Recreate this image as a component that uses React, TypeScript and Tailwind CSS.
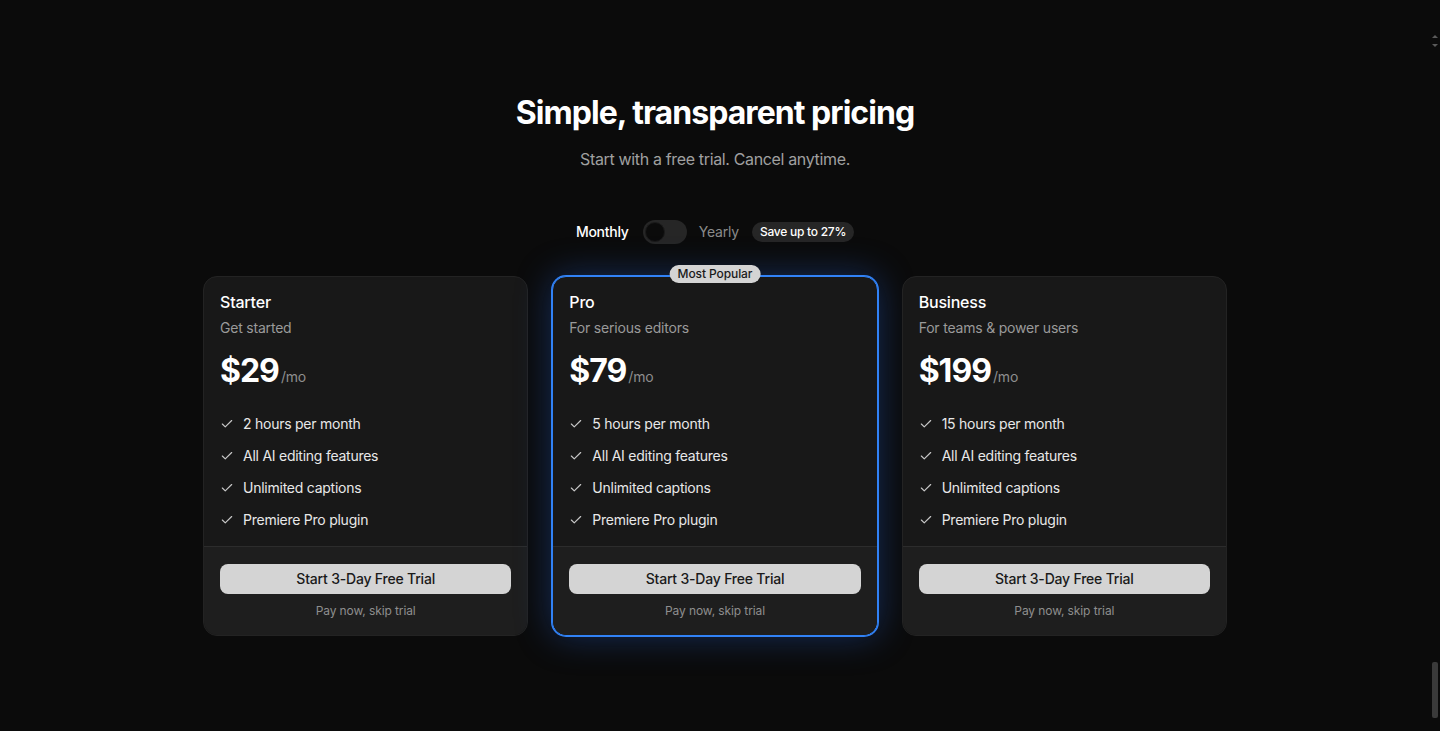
import React from "react";

const Check = () => (
  <svg width="14" height="14" viewBox="0 0 24 24" fill="none" stroke="#c8c8c8" strokeWidth="2" strokeLinecap="round" strokeLinejoin="round" className="shrink-0">
    <path d="M20 6 9 17l-5-5" />
  </svg>
);

type Plan = { name: string; desc: string; price: string; hours: string; popular?: boolean };

const plans: Plan[] = [
  { name: "Starter", desc: "Get started", price: "$29", hours: "2 hours per month" },
  { name: "Pro", desc: "For serious editors", price: "$79", hours: "5 hours per month", popular: true },
  { name: "Business", desc: "For teams & power users", price: "$199", hours: "15 hours per month" },
];

function Card({ p }: { p: Plan }) {
  const features = [p.hours, "All AI editing features", "Unlimited captions", "Premiere Pro plugin"];
  return (
    <div
      className={
        "relative flex-1 flex flex-col rounded-[14px] border bg-[#181818] " +
        (p.popular
          ? "border-[#3182f6] ring-1 ring-[#3182f6] shadow-[0_0_36px_rgba(40,110,240,0.35)]"
          : "border-[#232323]")
      }
    >
      {p.popular && (
        <div className="absolute left-1/2 -translate-x-1/2 -top-[12px] h-[18px] px-2 rounded-full bg-[#d4d4d4] text-[#1a1a1a] text-[12px] leading-[18px] font-medium tracking-[-0.1px] whitespace-nowrap">
          Most Popular
        </div>
      )}
      <div className="px-4 pt-[13px] pb-4 rounded-t-[14px]">
        <div className="text-white text-base leading-6 font-medium tracking-[-0.2px]">{p.name}</div>
        <div className="mt-1 text-[#9a9a9a] text-sm leading-5 tracking-[-0.2px]">{p.desc}</div>
        <div className="mt-[13px] flex items-baseline">
          <span className="text-white text-[32px] leading-10 font-bold tracking-[-1px]">{p.price}</span>
          <span className="ml-[2px] text-[#8e8e8e] text-sm tracking-[-0.2px]">/mo</span>
        </div>
        <ul className="mt-[23px] flex flex-col gap-3">
          {features.map((f) => (
            <li key={f} className="flex items-center gap-[9px] text-[#e8e8e8] text-sm leading-5 tracking-[-0.25px]">
              <Check />
              <span>{f}</span>
            </li>
          ))}
        </ul>
      </div>
      <div className="border-t border-[#2c2c2c] bg-[#1e1e1e] rounded-b-[14px] px-4 pt-[17px] pb-4 flex flex-col items-center">
        <button className="w-full h-[30px] rounded-lg bg-[#d4d4d4] text-[#1a1a1a] text-sm font-medium tracking-[-0.2px]">
          Start 3-Day Free Trial
        </button>
        <div className="mt-[9px] text-[12px] leading-4 text-[#8e8e8e] tracking-[-0.1px]">Pay now, skip trial</div>
      </div>
    </div>
  );
}

export default function App() {
  return (
    <div
      className="w-[1440px] h-[731px] bg-[#0b0b0b] flex overflow-hidden"
      style={{ fontFamily: "Inter, 'Noto Sans', sans-serif" }}
    >
      <main className="w-[1430px] flex flex-col items-center pt-[93px]">
        <h1 className="text-white text-[32px] leading-10 font-bold tracking-[-0.95px]">Simple, transparent pricing</h1>
        <p className="mt-[14px] text-[#a0a0a0] text-base leading-6 tracking-[-0.35px]">Start with a free trial. Cancel anytime.</p>
        <div className="mt-[49px] flex items-center h-6">
          <span className="text-white text-sm font-medium tracking-[-0.25px]">Monthly</span>
          <div className="ml-[14px] w-[44px] h-6 rounded-full bg-[#262626] flex items-center p-[2px]">
            <div className="w-5 h-5 rounded-full bg-[#0b0b0b] border border-[#1a1a1a]" />
          </div>
          <span className="ml-[12px] text-[#8a8a8a] text-sm tracking-[-0.2px]">Yearly</span>
          <span className="ml-[13px] h-5 px-2 rounded-full bg-[#262626] text-white text-[12px] leading-5 font-medium tracking-[-0.25px]">
            Save up to 27%
          </span>
        </div>
        <div className="mt-[32px] w-[1024px] flex gap-6">
          {plans.map((p) => (
            <Card key={p.name} p={p} />
          ))}
        </div>
      </main>
      <div className="w-[10px] flex flex-col items-center relative">
        <div className="mt-[35px] w-0 h-0 border-l-[3px] border-r-[3px] border-b-[3px] border-l-transparent border-r-transparent border-b-[#5a5a5a]" />
        <div className="mt-[6px] w-0 h-0 border-l-[3px] border-r-[3px] border-t-[3px] border-l-transparent border-r-transparent border-t-[#5a5a5a]" />
        <div className="absolute left-[2px] top-[662px] w-[6px] h-[56px] rounded-[2px] bg-[#3a3a3a]" />
      </div>
    </div>
  );
}
